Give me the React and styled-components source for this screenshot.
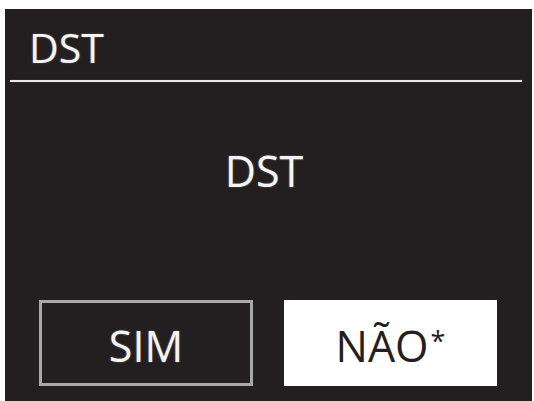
import React from "react";
import styled, { createGlobalStyle } from "styled-components";

const Global = createGlobalStyle`
  html, body { margin: 0; padding: 0; background: #ffffff; }
  body { font-family: "Open Sans", "Liberation Sans", sans-serif; }
`;

const Screen = styled.div`
  margin: 9px 0 0 5px;
  width: 527px;
  height: 392px;
  background: #231f20;
  display: flex;
  flex-direction: column;
  box-sizing: border-box;
  overflow: hidden;
`;

const Title = styled.div`
  padding: 18px 0 0 24px;
  font-size: 41px;
  line-height: 41px;
  height: 41px;
  color: #f4f4f4;
  text-shadow: 0 0 2px rgba(255, 255, 255, 0.35);
`;

const Rule = styled.div`
  margin: 12px 10px 0 5px;
  height: 2px;
  background: #e6e6e6;
  box-shadow: 0 0 1px rgba(255, 255, 255, 0.5);
`;

const Message = styled.div`
  margin-top: 67px;
  margin-right: 9px;
  text-align: center;
  font-size: 43px;
  line-height: 43px;
  height: 43px;
  color: #f4f4f4;
  text-shadow: 0 0 2px rgba(255, 255, 255, 0.35);
`;

const Buttons = styled.div`
  margin-top: 108px;
  margin-left: 34px;
  display: flex;
  gap: 31px;
`;

const Option = styled.div`
  box-sizing: border-box;
  width: ${(p) => (p.$selected ? "213px" : "214px")};
  height: 86px;
  padding-top: 4px;
  display: flex;
  align-items: center;
  justify-content: center;
  font-size: 43px;
  line-height: 43px;
  background: ${(p) => (p.$selected ? "#ffffff" : "#231f20")};
  color: ${(p) => (p.$selected ? "#231f20" : "#f4f4f4")};
  border: ${(p) => (p.$selected ? "none" : "3px solid #a8a8a8")};
  text-shadow: ${(p) =>
    p.$selected ? "none" : "0 0 2px rgba(255, 255, 255, 0.35)"};
`;

const Label = styled.span`
  white-space: nowrap;
`;

const Star = styled.span`
  font-size: 27px;
  line-height: 1;
  vertical-align: 11px;
  margin-left: 2px;
`;

export default function App() {
  return (
    <>
      <Global />
      <Screen>
        <Title>DST</Title>
        <Rule />
        <Message>DST</Message>
        <Buttons>
          <Option>
            <Label>SIM</Label>
          </Option>
          <Option $selected>
            <Label>
              NÃO<Star>*</Star>
            </Label>
          </Option>
        </Buttons>
      </Screen>
    </>
  );
}
